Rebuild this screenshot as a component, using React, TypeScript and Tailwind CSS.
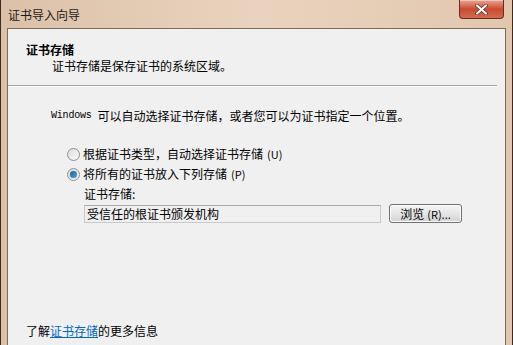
import React from "react";

const cjk = { fontFamily: '"Noto Sans CJK SC", "Noto Sans", sans-serif' };

function Radio({ checked }: { checked?: boolean }) {
  return (
    <span className="flex h-[13px] w-[13px] items-center justify-center rounded-full border border-[#8e8f8f] bg-gradient-to-br from-[#dcdcdc] to-[#fbfbfb]">
      {checked && (
        <span className="h-[7px] w-[7px] rounded-full bg-gradient-to-br from-[#1c5f96] to-[#4fa3dd] shadow-[0_0_1px_#2b6aa0]" />
      )}
    </span>
  );
}

function CloseButton() {
  return (
    <div className="absolute right-[8px] top-0 flex h-[19px] w-[45px] items-center justify-center rounded-b-[4px] border border-t-0 border-[#6b2a1f] bg-gradient-to-b from-[#e8a693] via-[#c94a2f] to-[#d26b4f] shadow-[inset_0_1px_0_rgba(255,255,255,0.4)]">
      <svg width="13" height="11" viewBox="0 0 13 11">
        <path d="M2 1.5 L11 9.5 M11 1.5 L2 9.5" stroke="#5a2418" strokeWidth="3.4" strokeLinecap="round" />
        <path d="M2 1.5 L11 9.5 M11 1.5 L2 9.5" stroke="#ffffff" strokeWidth="2.2" strokeLinecap="round" />
      </svg>
    </div>
  );
}

export default function App() {
  return (
    <div
      className="relative flex h-[345px] w-[513px] flex-col overflow-hidden border-l border-r border-[#3a2a20] bg-gradient-to-r from-[#dcc1a8] via-[#ead3be] to-[#e2c7ae] text-[12px] text-black"
      style={cjk}
    >
      <CloseButton />
      {/* title bar */}
      <div className="flex h-[28px] shrink-0 items-center pl-[7px] pt-[1px] text-[12px] text-[#1a1a1a]">
        证书导入向导
      </div>

      {/* client area */}
      <div className="ml-[6px] mr-[6px] flex flex-1 flex-col border-l border-t border-r border-[#7a6a5e] bg-[#f0f0f0]">
        {/* header */}
        <div className="flex flex-col pl-[18px] pt-[13px]">
          <div className="text-[12px] font-bold leading-[16px]">证书存储</div>
          <div className="pl-[26px] text-[12px] leading-[16px]">证书存储是保存证书的系统区域。</div>
        </div>
        <div className="mt-[11px] mr-[8px] border-b border-[#fdfdfd] border-t-[#a0a0a0] border-t" />

        {/* body */}
        <div className="flex flex-col pl-[43px] pt-[21px]">
          <div className="flex items-center leading-[16px]">
            <span className="font-mono text-[10px] tracking-[-0.02em]" style={{ fontFamily: '"Liberation Mono", monospace' }}>
              Windows&nbsp;
            </span>
            <span>可以自动选择证书存储，或者您可以为证书指定一个位置。</span>
          </div>

          <div className="mt-[22px] flex flex-col gap-[4px] pl-[16px]">
            <div className="flex items-center gap-[3px] leading-[16px]">
              <Radio />
              <span>
                根据证书类型，自动选择证书存储
                <span className="ml-[4px] text-[11px]">(U)</span>
              </span>
            </div>
            <div className="flex items-center gap-[3px] leading-[16px]">
              <Radio checked />
              <span>
                将所有的证书放入下列存储
                <span className="ml-[4px] text-[11px]">(P)</span>
              </span>
            </div>
            <div className="flex flex-col pl-[17px]">
              <div className="leading-[16px]">证书存储:</div>
              <div className="mt-[2px] flex items-center gap-[8px]">
                <div className="flex h-[18px] w-[297px] items-center border border-[#c9c9c9] border-t-[#a9a9a9] bg-[#f0f0f0] pl-[2px] leading-[16px]">
                  受信任的根证书颁发机构
                </div>
                <div className="flex h-[19px] w-[73px] items-center justify-center rounded-[3px] border border-[#707070] bg-gradient-to-b from-[#f4f4f4] via-[#e6e6e6] to-[#d2d2d2] text-[12px] leading-[16px] shadow-[inset_0_0_0_1px_#fcfcfc]">
                  浏览<span className="ml-[3px] text-[11px]">(R)...</span>
                </div>
              </div>
            </div>
          </div>
        </div>

        <div className="flex-1" />

        {/* footer link */}
        <div className="pb-[6px] pl-[18px] leading-[16px]">
          了解<span className="text-[#0066cc] underline">证书存储</span>的更多信息
        </div>
      </div>
    </div>
  );
}
